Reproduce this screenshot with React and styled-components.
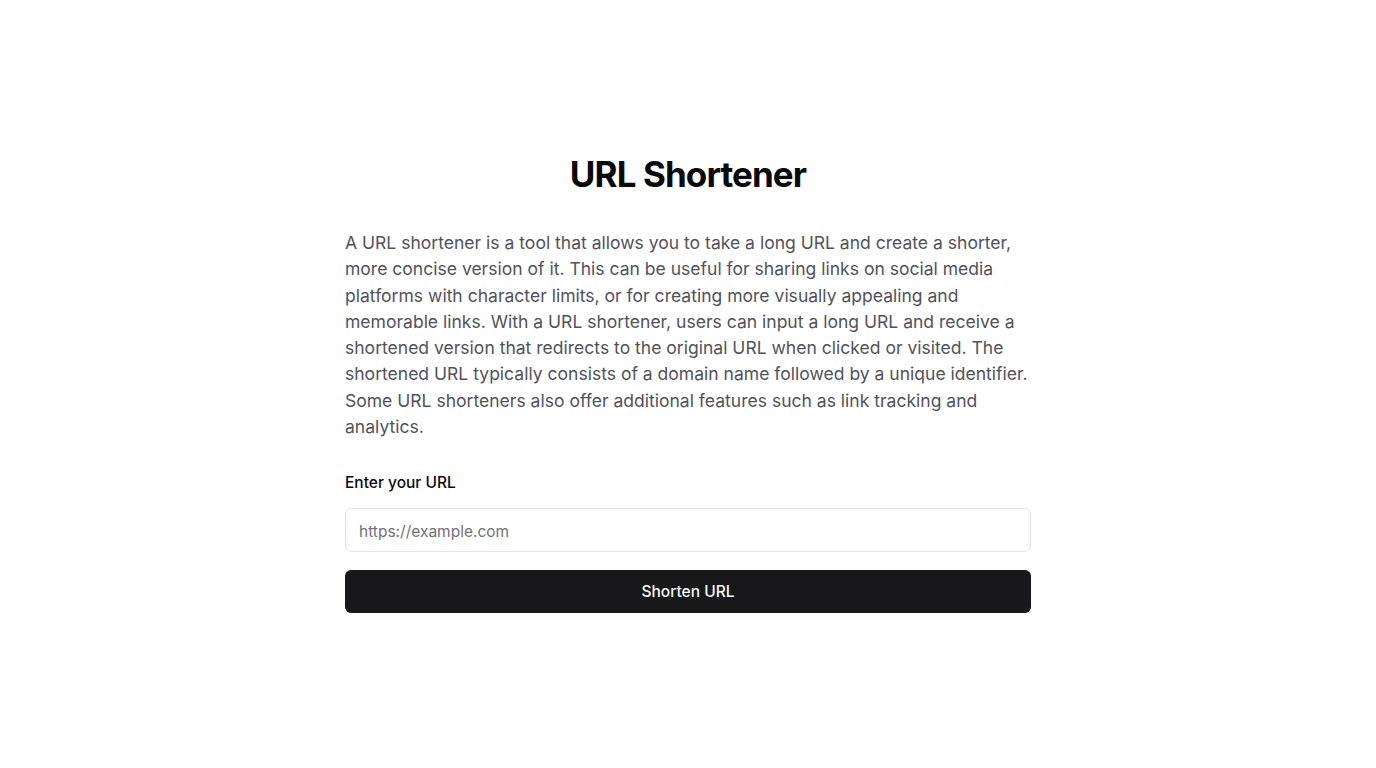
import React from 'react'
import styled, { createGlobalStyle } from 'styled-components'

const GlobalStyle = createGlobalStyle`
  * { box-sizing: border-box; }
  body {
    margin: 0;
    background: #ffffff;
    font-family: Inter, "Noto Sans", sans-serif;
  }
`

const Page = styled.main`
  min-height: 768px;
  display: flex;
  justify-content: center;
  padding-top: 154px;
`

const Container = styled.div`
  width: 686px;
  display: flex;
  flex-direction: column;
`

const Title = styled.h1`
  margin: 0;
  text-align: center;
  font-size: 35px;
  line-height: 40px;
  font-weight: 700;
  color: #09090b;
  letter-spacing: -0.9px;
`

const Description = styled.p`
  margin: 36px 0 0;
  font-size: 17.55px;
  line-height: 26.3px;
  color: #52525b;
`

const Form = styled.form`
  margin-top: 33px;
  display: flex;
  flex-direction: column;
`

const Label = styled.label`
  font-size: 15.5px;
  line-height: 20px;
  font-weight: 500;
  color: #09090b;
`

const Input = styled.input`
  margin-top: 15px;
  height: 44px;
  width: 100%;
  padding: 2px 13px 0;
  border: 1px solid #e4e4e7;
  border-radius: 6px;
  font-family: inherit;
  font-size: 15.5px;
  color: #09090b;
  outline: none;
  &::placeholder { color: #71717a; }
`

const Button = styled.button`
  margin-top: 18px;
  height: 43px;
  width: 100%;
  border: none;
  border-radius: 6px;
  background: #18181b;
  color: #fafafa;
  font-family: inherit;
  font-size: 15.5px;
  font-weight: 500;
  cursor: pointer;
`

export default function App() {
  return (
    <>
      <GlobalStyle />
      <Page>
        <Container>
          <Title>URL Shortener</Title>
          <Description>
            A URL shortener is a tool that allows you to take a long URL and create a shorter, more concise
            version of it. This can be useful for sharing links on social media platforms with character
            limits, or for creating more visually appealing and memorable links. With a URL shortener, users
            can input a long URL and receive a shortened version that redirects to the original URL when
            clicked or visited. The shortened URL typically consists of a domain name followed by a unique
            identifier. Some URL shorteners also offer additional features such as link tracking and analytics.
          </Description>
          <Form onSubmit={e => e.preventDefault()}>
            <Label htmlFor="url">Enter your URL</Label>
            <Input id="url" type="url" placeholder="https://example.com" />
            <Button type="submit">Shorten URL</Button>
          </Form>
        </Container>
      </Page>
    </>
  )
}
